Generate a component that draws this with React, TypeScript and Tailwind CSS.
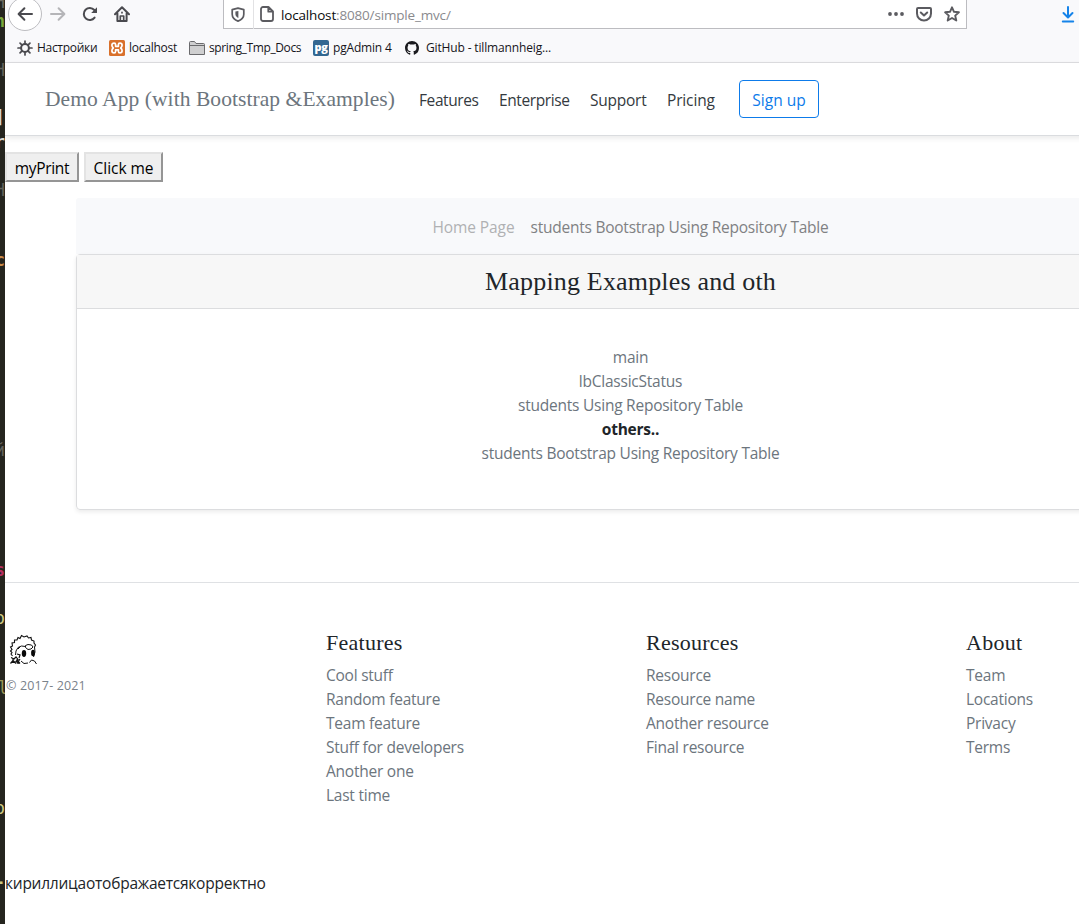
import React from "react";

type IconProps = { className?: string };

const BackIcon = () => (
  <svg width="16" height="16" viewBox="0 0 16 16" fill="none" stroke="#4a4a4f" strokeWidth="2" strokeLinecap="round" strokeLinejoin="round">
    <path d="M15 8H1.8M7.4 2.2 1.6 8l5.8 5.8" />
  </svg>
);

const ForwardIcon = () => (
  <svg width="16" height="16" viewBox="0 0 16 16" fill="none" stroke="#b5b5b8" strokeWidth="2" strokeLinecap="round" strokeLinejoin="round">
    <path d="M1 8h13.2M8.6 2.2 14.4 8l-5.8 5.8" />
  </svg>
);

const ReloadIcon = () => (
  <svg width="16" height="16" viewBox="0 0 16 16" fill="none" stroke="#4a4a4f" strokeWidth="2" strokeLinecap="round">
    <path d="M12.6 11.6A6 6 0 1 1 12.3 4" />
    <path d="M15 1.2v5.3a.5.5 0 0 1-.5.5H9.2z" fill="#4a4a4f" stroke="none" />
  </svg>
);

const HomeIcon = () => (
  <svg width="16" height="16" viewBox="0 0 16 16" fill="none" stroke="#4a4a4f" strokeWidth="2" strokeLinecap="round" strokeLinejoin="round">
    <path d="M1 8.2 8 1.2l7 7M3.4 7.5V15h9.2V7.5" />
    <path d="M6.3 14.5V10h3.4v4.5M8 6.3v.5" strokeWidth="1.7" />
  </svg>
);

const ShieldIcon = () => (
  <svg width="14" height="15" viewBox="0 0 14 15" fill="none" stroke="#5b5b60" strokeWidth="1.7" strokeLinejoin="round">
    <path d="M7 1.1 12.8 2.6v4.6c0 3.1-2 5.4-5.8 6.9C3.200 12.600 1.200 10.300 1.200 7.200V2.600z" />
    <path d="M7.400 4v7C5.400 10 4.400 8.700 4.400 7V4.600z" fill="#5b5b60" stroke="none" />
  </svg>
);

const PageIcon = () => (
  <svg width="14" height="16" viewBox="0 0 14 16" fill="none" stroke="#5b5b60" strokeWidth="1.8" strokeLinejoin="round">
    <path d="M3 1h5.500L13 5.500V13a2 2 0 0 1-2 2H3a2 2 0 0 1-2-2V3a2 2 0 0 1 2-2zM8.300 1.300V5.700h4.500" />
  </svg>
);

const DotsIcon = () => (
  <svg width="16" height="4" viewBox="0 0 16 4" fill="#5b5b60">
    <circle cx="2" cy="2" r="1.900" />
    <circle cx="8" cy="2" r="1.900" />
    <circle cx="14" cy="2" r="1.900" />
  </svg>
);

const PocketIcon = () => (
  <svg width="16" height="15" viewBox="0 0 16 15" fill="none" stroke="#5b5b60" strokeWidth="2" strokeLinecap="round" strokeLinejoin="round">
    <path d="M2 1h12a1 1 0 0 1 1 1v4.500a7 7 0 0 1-14 0V2a1 1 0 0 1 1-1z" />
    <path d="M4.800 5.500 8 8.500l3.200-3" />
  </svg>
);

const StarIcon = () => (
  <svg width="16" height="16" viewBox="0 0 16 16" fill="none" stroke="#5b5b60" strokeWidth="1.900" strokeLinejoin="round">
    <path d="M8 1.300 10 5.800l4.900.5-3.700 3.300 1.100 4.900L8 12l-4.300 2.500 1.100-4.900L1.100 6.300 6 5.800z" />
  </svg>
);

const DownloadIcon = () => (
  <svg width="14" height="17" viewBox="0 0 14 17" fill="none" stroke="#1583e9" strokeWidth="2" strokeLinecap="round" strokeLinejoin="round">
    <path d="M7 1v10M2.500 7 7 11.500 11.500 7M1.800 15.500h10.400" />
  </svg>
);

const GearIcon = () => (
  <svg width="16" height="16" viewBox="0 0 16 16" fill="none" stroke="#4a4a4f" strokeWidth="2" strokeLinecap="round">
    <circle cx="8" cy="8" r="3.900" />
    <path d="M8 1v2.500M8 12.500V15M1 8h2.500M12.500 8H15M3.050 3.050l1.800 1.800M11.150 11.150l1.800 1.800M12.950 3.050l-1.800 1.800M4.850 11.150l-1.800 1.800" strokeWidth="1.700" />
  </svg>
);

const XamppIcon = () => (
  <svg width="16" height="16" viewBox="0 0 16 16">
    <rect width="16" height="16" rx="1.500" fill="#d9702b" />
    <path
      d="M6.600 6.300V4.600C6.600 3.600 6 3.100 5.100 3.100C3.700 3.100 2.900 4 2.900 5.300C2.900 6.500 3.400 7.300 4.300 8C3.400 8.700 2.900 9.500 2.900 10.700C2.900 12 3.700 12.900 5.100 12.900C6 12.900 6.600 12.400 6.600 11.400V9.800H9.400V11.400C9.400 12.400 10 12.900 10.900 12.900C12.300 12.900 13.100 12 13.100 10.700C13.100 9.500 12.600 8.700 11.700 8C12.600 7.300 13.100 6.500 13.100 5.300C13.100 4 12.300 3.100 10.900 3.100C10 3.100 9.400 3.600 9.400 4.600V6.300Z"
      fill="none"
      stroke="#fff"
      strokeWidth="1.700"
      strokeLinejoin="round"
    />
  </svg>
);

const FolderIcon = () => (
  <svg width="16" height="14" viewBox="0 0 16 14" fill="#cfcfd0" stroke="#6a6a6d" strokeWidth="1">
    <path d="M.5 13.500V1.500a1 1 0 0 1 1-1h4l1.500 2h7.500a1 1 0 0 1 1 1v10z" />
    <path d="M.5 4.500h15" />
  </svg>
);

const PgIcon = () => (
  <span className="flex h-4 w-4 items-center justify-center rounded-[2px] bg-[#336791] pb-[3px] font-['Open_Sans',sans-serif] text-[11px] leading-none font-extrabold tracking-[-0.300px] text-white">
    pg
  </span>
);

const GithubIcon = () => (
  <svg width="14" height="14" viewBox="0 0 16 16" fill="#1b1b1f">
    <path d="M8 0C3.580 0 0 3.580 0 8c0 3.540 2.290 6.530 5.470 7.590.4.070.55-.17.55-.38 0-.19-.01-.82-.01-1.490-2.010.37-2.530-.49-2.690-.94-.09-.23-.48-.94-.82-1.130-.28-.15-.68-.52-.01-.53.63-.01 1.080.58 1.230.82.72 1.210 1.870.87 2.330.66.07-.52.28-.87.51-1.070-1.780-.2-3.640-.89-3.640-3.950 0-.87.31-1.590.82-2.150-.08-.2-.36-1.020.08-2.120 0 0 .67-.21 2.200.82a7.600 7.600 0 0 1 4 0c1.530-1.040 2.200-.82 2.200-.82.44 1.100.16 1.920.08 2.120.51.56.82 1.270.82 2.150 0 3.070-1.870 3.750-3.650 3.950.29.25.54.73.54 1.480 0 1.070-.01 1.930-.01 2.200 0 .21.15.46.55.38A8 8 0 0 0 16 8c0-4.420-3.580-8-8-8z" />
  </svg>
);

const Mascot = ({ className }: IconProps) => (
  <svg className={className} width="32" height="32" viewBox="0 0 32 32" fill="none" stroke="#111" strokeWidth="1">
    <path
      d="M5.500 22 4 20 5 18.500 3.500 17 5 15.500 3.500 13 5.500 12 5 9 7.500 8.500 7.500 6 10 6 11 3.500 13 4.500 14.500 1.500 17 3 20 2 21.500 4 24 3.500 24.500 6 27 7 27 9 28.500 11 27.500 13"
      strokeWidth="1.100"
    />
    <path d="M8.500 21 9 17l2-3.500 3.500-1.500 4 .5M27.500 13l.5 5-1.500 5" />
    <path d="M18.500 11.500 21 10.500l3.500.5 1.500 2-2 2-3 .5-2.500-2zM11 15l2-2" />
    <ellipse cx="17" cy="19.500" rx="2.200" ry="3.400" fill="#080808" stroke="none" />
    <ellipse cx="26" cy="19" rx="1.900" ry="3.200" fill="#080808" stroke="none" />
    <path d="M4 23.500 7 25l2-2 2 2.500-2 2 3 2M3.500 29.500l2.500-3 3 3M6 25v4M9.500 25.500l3.500 4M13 25l-3 4.500M10 20l3 1-1 3" strokeWidth="1.200" />
    <path d="m14 27 3 2.500 4-.5M22.500 28.500l2-2.500 3 1 2 3" />
  </svg>
);

const Glyph = ({ className, children }: { className: string; children: string }) => (
  <span className={`absolute right-0 font-["DejaVu_Sans_Mono",monospace] text-[17px] leading-5 ${className}`}>{children}</span>
);

const EditorStrip = () => (
  <aside className="relative w-[5px] shrink-0 overflow-hidden bg-[#25251f]">
    <Glyph className="top-[-8px] text-[#68685f]">H</Glyph>
    <Glyph className="top-[11px] font-bold text-[#7aa83a]">h</Glyph>
    <Glyph className="top-[60px] text-[#62625b]">H</Glyph>
    <Glyph className="top-[107px] text-[#d8d8df]">]</Glyph>
    <Glyph className="top-[132px] font-bold text-[#d8d8d2]">r</Glyph>
    <Glyph className="top-[180px] text-[#62625b]">H</Glyph>
    <Glyph className="top-[250px] font-bold text-[#c78a49]">c</Glyph>
    <Glyph className="top-[440px] text-[#62625b]">й</Glyph>
    <Glyph className="top-[560px] font-bold text-[#b52e61]">s</Glyph>
    <Glyph className="top-[608px] text-[#cdc981]">o</Glyph>
    <Glyph className="top-[678px] right-[-3px] text-[#9b9655]">l</Glyph>
    <Glyph className="top-[798px] text-[#cdc981]">o</Glyph>
    <Glyph className="top-[872px] font-bold text-[#cdc981]">-</Glyph>
  </aside>
);

const Bookmark = ({ icon, label, className }: { icon: React.ReactNode; label: string; className: string }) => (
  <div className={`flex shrink-0 items-center ${className}`}>
    {icon}
    <span>{label}</span>
  </div>
);

const BrowserChrome = () => (
  <header className="flex h-[63px] shrink-0 flex-col border-b border-[#dedee1] bg-[#f9f9fb] text-[12px] text-[#15141a]">
    <div className="flex h-[30px] shrink-0 items-start">
      <div className="-mt-[3px] ml-[3px] flex h-[34px] w-[34px] shrink-0 items-center justify-center rounded-full border border-[#bdbdc1] bg-white">
        <BackIcon />
      </div>
      <div className="mt-1.5 ml-2 flex shrink-0 gap-4">
        <ForwardIcon />
        <ReloadIcon />
        <HomeIcon />
      </div>
      <div className="ml-[93px] flex h-[29px] w-[744px] shrink-0 items-center border border-t-0 border-[#bcbcc0] bg-white pl-[7px]">
        <ShieldIcon />
        <span className="mr-1.5 ml-2 h-[29px] w-px bg-[#e2e2e4]" />
        <PageIcon />
        <span className="ml-[7px] pt-0.5 text-[13.500px] tracking-[-0.170px] text-[#8a8a8e]">
          <span className="text-[#0c0c0d]">localhost</span>:8080/simple_mvc/
        </span>
        <span className="ml-auto flex items-center gap-3 pr-1.5">
          <DotsIcon />
          <PocketIcon />
          <StarIcon />
        </span>
      </div>
      <div className="mt-1.5 ml-[94px] shrink-0">
        <DownloadIcon />
      </div>
    </div>
    <nav className="flex h-8 items-center pt-1 pl-3 leading-4 whitespace-nowrap">
      <Bookmark icon={<GearIcon />} label="Настройки" className="w-[92px] gap-1 tracking-[-0.300px]" />
      <Bookmark icon={<XamppIcon />} label="localhost" className="w-20 gap-1 tracking-[-0.250px]" />
      <Bookmark icon={<FolderIcon />} label="spring_Tmp_Docs" className="w-[124px] gap-1 tracking-[-0.380px]" />
      <Bookmark icon={<PgIcon />} label="pgAdmin 4" className="w-[92px] gap-1 tracking-[-0.180px]" />
      <Bookmark icon={<GithubIcon />} label="GitHub - tillmannheig..." className="gap-[7px] tracking-[-0.150px]" />
    </nav>
  </header>
);

const SiteNav = () => (
  <nav className="flex h-[73px] shrink-0 items-center border-b border-[#dadcdf] bg-white pl-10 whitespace-nowrap shadow-[0_2px_6px_rgba(0,0,0,0.09)]">
    <h1 className="w-[374px] shrink-0 font-['Liberation_Serif',serif] text-[21.500px] leading-6 tracking-[0.070px] text-[#6c757d]">
      Demo App (with Bootstrap &amp;Examples)
    </h1>
    <a className="w-20 shrink-0 pt-0.5 tracking-[-0.400px] text-[#343a40]">Features</a>
    <a className="w-[91px] shrink-0 pt-0.5 tracking-[-0.400px] text-[#343a40]">Enterprise</a>
    <a className="w-[77px] shrink-0 pt-0.5 text-[#343a40]">Support</a>
    <a className="w-[72px] shrink-0 pt-0.5 tracking-[-0.150px] text-[#343a40]">Pricing</a>
    <a className="flex h-[38px] w-20 shrink-0 items-center justify-center rounded border border-[#0d7bea] pt-0.5 tracking-[0px] text-[#0d7bea]">
      Sign up
    </a>
  </nav>
);

const ClassicButton = ({ children, className }: { children: string; className: string }) => (
  <button
    className={`flex h-[30px] items-center justify-center border-2 border-t-[#e3e3e3] border-r-[#959595] border-b-[#959595] border-l-[#e3e3e3] bg-[#efefef] pt-0.5 text-black ${className}`}
  >
    {children}
  </button>
);

const FooterColumn = ({ title, links }: { title: string; links: string[] }) => (
  <section className="w-80 shrink-0">
    <h5 className="mb-2 font-['Liberation_Serif',serif] text-[22px] leading-6 tracking-[0.250px] text-[#212529]">{title}</h5>
    <ul>
      {links.map((link) => (
        <li key={link}>{link}</li>
      ))}
    </ul>
  </section>
);

export default function App() {
  return (
    <div className="flex h-[924px] w-[1079px] overflow-hidden bg-white font-['Open_Sans','Noto_Sans',sans-serif]">
      <EditorStrip />
      <div className="flex min-w-0 flex-1 flex-col overflow-hidden">
        <BrowserChrome />
        <main className="flex w-[1280px] flex-col text-[15.500px] leading-6 tracking-[-0.240px] text-[#6c757d]">
          <SiteNav />
          <div className="mt-4 flex gap-[5px]">
            <ClassicButton className="w-[74px] tracking-[-0.300px]">myPrint</ClassicButton>
            <ClassicButton className="w-[79px] tracking-[-0.050px]">Click me</ClassicButton>
          </div>
          <div className="mt-4 ml-[71px] w-[1109px]">
            <nav className="flex h-14 items-center justify-center gap-4 rounded-t-[3px] bg-[#f8f9fb] pt-0.5 text-[#808183]">
              <span className="tracking-[-0.100px] text-[#b0b1b3]">Home Page</span>
              <span>students Bootstrap Using Repository Table</span>
            </nav>
            <section className="h-64 rounded border border-[#dcdddf] text-center shadow-[0_2px_4px_rgba(0,0,0,0.08)]">
              <h4 className="flex h-[54px] items-center justify-center border-b border-[#dcdddf] bg-[#f7f7f7] font-['Liberation_Serif',serif] text-[26px] tracking-[0.180px] text-[#212529]">
                Mapping Examples and oth
              </h4>
              <ul className="pt-9">
                <li>main</li>
                <li>lbClassicStatus</li>
                <li>students Using Repository Table</li>
                <li className="font-bold text-[#212529]">others..</li>
                <li>students Bootstrap Using Repository Table</li>
              </ul>
            </section>
          </div>
          <footer className="mt-[72px] flex h-[289px] border-t border-[#dfe1e4] pt-12 pl-px">
            <div className="w-80 shrink-0">
              <Mascot className="mt-[3px] ml-px" />
              <small className="mt-2 block text-[12.500px] tracking-[0.150px] text-[#7a828a]">© 2017- 2021</small>
            </div>
            <FooterColumn
              title="Features"
              links={["Cool stuff", "Random feature", "Team feature", "Stuff for developers", "Another one", "Last time"]}
            />
            <FooterColumn title="Resources" links={["Resource", "Resource name", "Another resource", "Final resource"]} />
            <FooterColumn title="About" links={["Team", "Locations", "Privacy", "Terms"]} />
          </footer>
          <p className="text-[#212529]">кириллицаотображаетсякорректно</p>
        </main>
      </div>
    </div>
  );
}
